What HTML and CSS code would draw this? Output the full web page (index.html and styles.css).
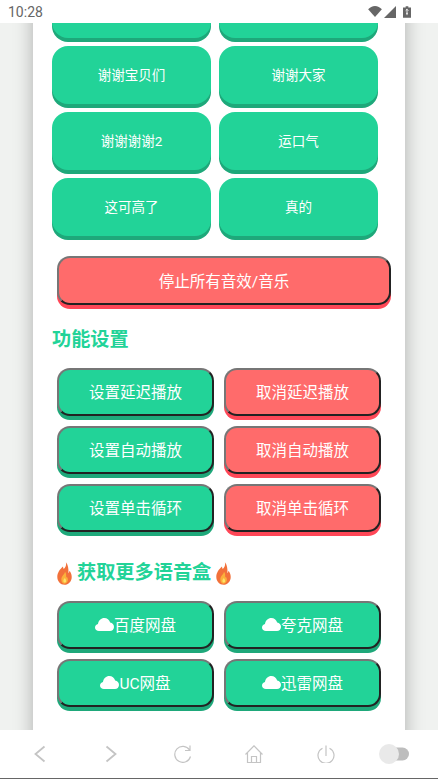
FILE: index.html
```html
<!DOCTYPE html>
<html>
<head>
  <meta charset="utf-8">
  <title>语音盒</title>
  <link rel="stylesheet" href="styles.css">
</head>
<body>
  <svg class="defs" width="0" height="0">
    <symbol id="cloud" viewBox="0 0 19 13">
      <path d="M4 13C1.700 13 0 11.400 0 9.400 0 7.600 1.300 6.200 3 5.900 3.500 2.500 6.100 0 9.300 0c2.800 0 5.100 1.800 5.900 4.500 2.200.3 3.800 2.200 3.800 4.400 0 2.300-1.800 4.100-4 4.100z" fill="#fff"/>
    </symbol>
    <symbol id="fire" viewBox="0 0 16 24">
      <path d="M9.500 0c.8 3.500-.6 5.400-2.300 7.300-.5-.9-.8-1.800-.8-2.800C3.200 7.400.3 11 .3 15.500.3 20.500 3.700 24 8 24s7.700-3.500 7.700-8.300c0-2.800-1.100-4.800-2.300-6.600-.1 1-.5 1.900-1.200 2.500C12.400 7.200 12 3 9.500 0z" fill="#f2713a"/>
      <path d="M8.500 10c.2 2.300-3.900 4.500-3.900 8.300 0 2.600 1.500 4.500 3.500 4.500s3.500-1.700 3.500-4.100c0-1.500-.6-2.700-1.200-3.500-.2.600-.5 1-.9 1.300C10 14 10 11.800 8.500 10z" fill="#fbb03b"/>
      <path d="M8.300 16.500c-.2 1.200-1.500 1.700-1.500 3.200 0 1.100.6 2 1.500 2s1.500-.8 1.500-1.900c0-1.400-1.100-2-1.500-3.300z" fill="#fde26a"/>
    </symbol>
  </svg>

  <div class="status-bar">
    <span class="time">10:28</span>
    <div class="status-icons">
      <svg width="14" height="11" viewBox="0 0 15 12"><path d="M0 3.500C2 1.400 4.600 0 7.500 0S13 1.400 15 3.500L7.500 12z" fill="#666"/></svg>
      <svg width="12" height="12" viewBox="0 0 13 13"><path d="M0 13 13 0v13z" fill="#666"/></svg>
      <svg class="battery" width="8" height="12" viewBox="0 0 9 13"><path d="M3 0h3v1.500h3V13H0V1.500h3z" fill="#666"/><path d="M4.500 3v7M3 5l1.500-1.500L6 5M3.500 8h2" stroke="#fff" stroke-width="1" fill="none"/></svg>
    </div>
  </div>

  <div class="main">
    <div class="panel">
      <div class="sound-grid">
        <button class="sound-btn"></button>
        <button class="sound-btn"></button>
        <button class="sound-btn">谢谢宝贝们</button>
        <button class="sound-btn">谢谢大家</button>
        <button class="sound-btn">谢谢谢谢2</button>
        <button class="sound-btn">运口气</button>
        <button class="sound-btn">这可高了</button>
        <button class="sound-btn">真的</button>
      </div>

      <button class="action-btn red stop-btn">停止所有音效/音乐</button>

      <h2 class="section-title">功能设置</h2>
      <div class="action-grid">
        <button class="action-btn green">设置延迟播放</button>
        <button class="action-btn red">取消延迟播放</button>
        <button class="action-btn green">设置自动播放</button>
        <button class="action-btn red">取消自动播放</button>
        <button class="action-btn green">设置单击循环</button>
        <button class="action-btn red">取消单击循环</button>
      </div>

      <h2 class="section-title more-title">
        <svg class="fire" width="15" height="23"><use href="#fire"/></svg>
        获取更多语音盒
        <svg class="fire" width="15" height="23"><use href="#fire"/></svg>
      </h2>
      <div class="action-grid">
        <button class="action-btn green"><svg class="cloud" width="19" height="13"><use href="#cloud"/></svg>百度网盘</button>
        <button class="action-btn green"><svg class="cloud" width="19" height="13"><use href="#cloud"/></svg>夸克网盘</button>
        <button class="action-btn green"><svg class="cloud" width="19" height="13"><use href="#cloud"/></svg>UC网盘</button>
        <button class="action-btn green"><svg class="cloud" width="19" height="13"><use href="#cloud"/></svg>迅雷网盘</button>
      </div>
    </div>
  </div>

  <div class="nav-bar">
    <svg width="18" height="18" viewBox="0 0 18 18"><path d="M13.500 1.500 4.500 9l9 7.500" class="nav-line"/></svg>
    <svg width="18" height="18" viewBox="0 0 18 18"><path d="M4.500 1.500 13.500 9l-9 7.500" class="nav-line"/></svg>
    <svg width="18" height="18" viewBox="0 0 18 18"><path d="M15.500 5A8 8 0 1 0 16.500 11.500M16 .5v5h-5" class="nav-line thin"/></svg>
    <svg width="18" height="18" viewBox="0 0 18 18"><path d="M.5 9.500 9 .8l8.500 8.700M2.500 8v9.500h13V8M6.500 17.500v-6h5v6" class="nav-line thin"/></svg>
    <svg width="18" height="18" viewBox="0 0 18 18"><path d="M5.500 3.200a8 8 0 1 0 7 0M9 .5V11" class="nav-line thin"/></svg>
    <svg class="toggle" width="32" height="22" viewBox="0 0 32 22"><rect x="10" y="4.500" width="21" height="13" rx="6.500" fill="#bdbdbd"/><circle cx="11" cy="11" r="10" fill="#e9e9e9"/></svg>
  </div>
</body>
</html>
```

FILE: styles.css
```css
html, body {
  margin: 0;
  height: 100%;
}

body {
  display: flex;
  flex-direction: column;
  overflow: hidden;
  font-family: Roboto, "Noto Sans CJK SC", sans-serif;
  background-color: white;
}

.defs {
  display: none;
}

.status-bar {
  flex: 0 0 23px;
  display: flex;
  align-items: center;
  justify-content: space-between;
  padding: 0 27px 0 8px;
  background-color: white;
}

.time {
  font-size: 14px;
  color: #666;
}

.status-icons {
  display: flex;
  align-items: center;
  gap: 2px;
}

.battery {
  margin-left: 5px;
}

.main {
  flex: 1;
  min-height: 0;
  overflow: hidden;
  background-color: #f0f2f0;
}

.panel {
  width: 372px;
  min-height: 800px;
  box-sizing: border-box;
  margin: -43px 0 0 33px;
  padding: 0 19px;
  background-color: white;
  box-shadow: 0 0 18px rgba(0, 0, 0, 0.28);
}

button {
  padding: 0;
  font-family: inherit;
  color: white;
}

.sound-grid {
  display: grid;
  grid-template-columns: 159px 159px;
  gap: 8px;
}

.sound-btn {
  height: 58px;
  border: none;
  padding-bottom: 2px;
  border-radius: 16px;
  font-size: 13.5px;
  background-color: #22d398;
  box-shadow: 0 4px 0 #1ea87a;
}

.action-btn {
  display: flex;
  align-items: center;
  justify-content: center;
  height: 48px;
  box-sizing: border-box;
  padding-bottom: 2px;
  border: 2px solid;
  border-color: #767676 #222 #222 #767676;
  border-radius: 13px;
  font-size: 15.5px;
}

.action-btn.green {
  background-color: #22d398;
  box-shadow: 0 4px 0 #1ea87a;
}

.action-btn.red {
  background-color: #ff6b6b;
  box-shadow: 0 4px 0 #ff4757;
}

.stop-btn {
  width: 334px;
  height: 49px;
  margin: 20px 0 0 5px;
}

.section-title {
  margin: 23px 0 16px;
  font-size: 19.2px;
  line-height: 24px;
  font-weight: 700;
  color: #22d398;
}

.more-title {
  display: flex;
  align-items: center;
  gap: 5px;
  margin: 28px 0 15px 5px;
  line-height: 26px;
}

.action-grid {
  display: grid;
  grid-template-columns: 157px 157px;
  gap: 10px;
  margin-left: 5px;
}

.nav-bar {
  flex: 0 0 49px;
  display: grid;
  grid-template-columns: repeat(6, 71.5px);
  justify-items: center;
  align-items: center;
  box-sizing: border-box;
  padding: 0 0 0 4px;
  background-color: white;
  border-bottom: 1px solid #666;
}

.toggle {
  margin-right: 6px;
}

.nav-line {
  fill: none;
  stroke: #c4c4c4;
  stroke-width: 1.800;
}

.nav-line.thin {
  stroke-width: 1.200;
}
```
